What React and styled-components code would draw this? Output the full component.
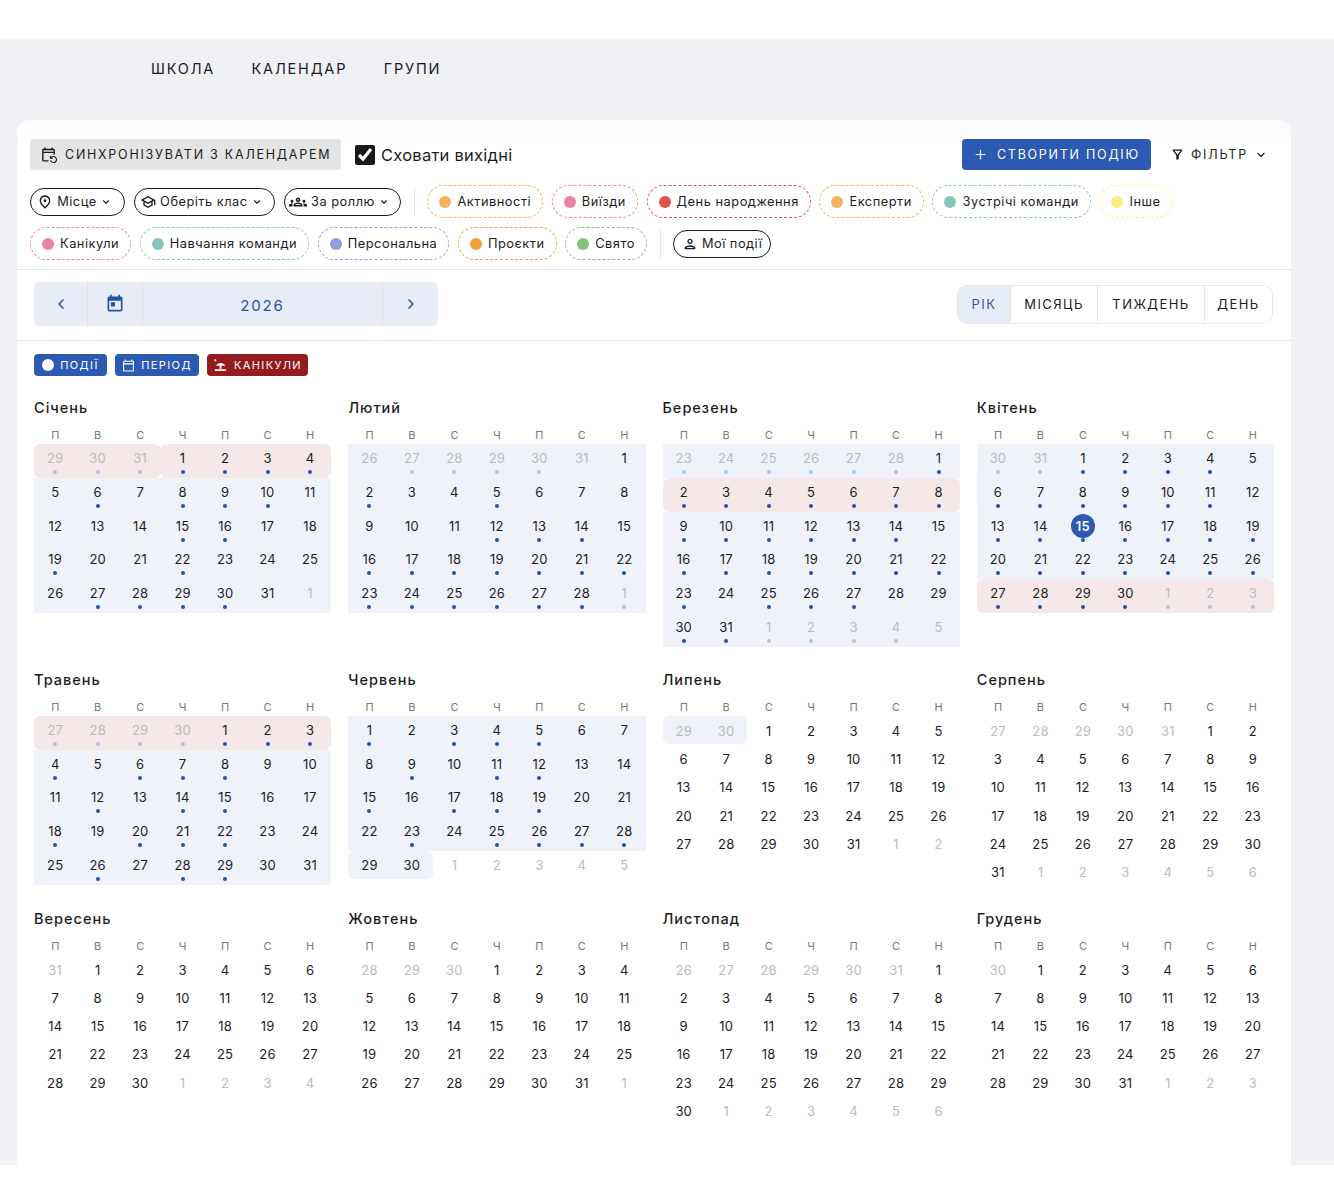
import React from 'react';
import styled, { createGlobalStyle } from 'styled-components';
import { ChevronLeft, ChevronRight, ChevronDown, Plus } from 'lucide-react';
import {
  MdOutlineEventRepeat, MdOutlinePlace, MdOutlineSchool, MdOutlineGroups, MdOutlinePerson,
  MdOutlineFilterAlt, MdToday, MdOutlineCalendarToday,
} from 'react-icons/md';

const GlobalStyle = createGlobalStyle`
  html, body { margin: 0; padding: 0; background: #fff; }
  body { font-family: Inter, "Noto Sans", sans-serif; color: #1c1c1e; overflow: hidden; }
  * { box-sizing: border-box; }
`;

const WEEK = ['П', 'В', 'С', 'Ч', 'П', 'С', 'Н'];

// pink: [from, to) cell ranges, blue: count of shaded cells, dots: [prev month days, days, next month days]
const MONTHS = [
  { name: 'Січень', blue: 35, pink: [[0, 3], [3, 7]], dots: [[29, 30, 31], [1, 2, 3, 4, 6, 8, 9, 10, 15, 16, 19, 22, 27, 28, 29, 30], []] },
  { name: 'Лютий', blue: 35, pink: [], dots: [[27, 28, 29, 30], [2, 5, 12, 13, 14, 16, 17, 18, 19, 20, 21, 22, 23, 24, 25, 26, 27, 28], [1]] },
  { name: 'Березень', blue: 42, pink: [[7, 14]], dots: [[23, 24, 25, 26, 27, 28], [1, 2, 3, 4, 5, 6, 7, 8, 9, 10, 11, 12, 13, 14, 16, 17, 18, 19, 20, 21, 22, 23, 25, 26, 27, 30, 31], [1, 2, 3, 4]] },
  { name: 'Квітень', blue: 35, pink: [[28, 35]], today: 15, dots: [[30, 31], [1, 2, 3, 4, 6, 7, 8, 9, 10, 11, 13, 14, 15, 16, 17, 18, 19, 20, 21, 22, 23, 24, 25, 26, 27, 28, 29, 30], [1, 2, 3]] },
  { name: 'Травень', blue: 35, pink: [[0, 7]], dots: [[27, 28, 29, 30], [1, 2, 3, 4, 6, 7, 8, 12, 14, 15, 18, 20, 21, 22, 26, 28, 29], []] },
  { name: 'Червень', blue: 30, pink: [], dots: [[], [1, 3, 4, 5, 9, 11, 12, 15, 17, 18, 19, 23, 25, 26, 27, 28], []] },
  { name: 'Липень', blue: 2, pink: [], dots: [[], [], []] },
  { name: 'Серпень', blue: 0, pink: [], dots: [[], [], []] },
  { name: 'Вересень', blue: 0, pink: [], dots: [[], [], []] },
  { name: 'Жовтень', blue: 0, pink: [], dots: [[], [], []] },
  { name: 'Листопад', blue: 0, pink: [], dots: [[], [], []] },
  { name: 'Грудень', blue: 0, pink: [], dots: [[], [], []] },
];

function buildCells(month, index) {
  const first = (new Date(2026, index, 1).getDay() + 6) % 7;
  const days = new Date(2026, index + 1, 0).getDate();
  const prevDays = new Date(2026, index, 0).getDate();
  const cells = [];
  for (let i = first - 1; i >= 0; i--) {
    const day = prevDays - i;
    cells.push({ day, muted: true, dot: month.dots[0].includes(day) });
  }
  for (let day = 1; day <= days; day++) {
    cells.push({ day, today: month.today === day, dot: month.dots[1].includes(day) });
  }
  let next = 1;
  while (cells.length % 7) {
    cells.push({ day: next, muted: true, dot: month.dots[2].includes(next) });
    next++;
  }
  return cells.map((cell, i) => {
    const range = month.pink.find(([from, to]) => i >= from && i < to);
    if (range) {
      return { ...cell, tone: 'pink', roundLeft: i === range[0], roundRight: i === range[1] - 1 };
    }
    if (i < month.blue) {
      return { ...cell, tone: 'blue', roundRight: i === month.blue - 1 && month.blue % 7 !== 0, roundLeft: month.blue % 7 !== 0 && i === month.blue - month.blue % 7 };
    }
    return cell;
  });
}

function MonthCalendar({ month, index }) {
  const plain = month.dots[1].length === 0;
  return (
    <Month>
      <MonthTitle>{month.name}</MonthTitle>
      <Days>
        {WEEK.map((w, i) => <WeekDay key={i}>{w}</WeekDay>)}
        {buildCells(month, index).map((c, i) => (
          <Day key={i} $tone={c.tone} $dot={c.dot} $left={c.roundLeft} $right={c.roundRight}>
            <DayNumber $muted={c.muted} $today={c.today} $plain={plain}>{c.day}</DayNumber>
            {c.dot && <Dot $muted={c.muted} />}
          </Day>
        ))}
      </Days>
    </Month>
  );
}

const TYPES_ONE = [
  ['Активності', '#f2b15c'], ['Виїзди', '#e683a6'], ['День народження', '#e0524f'],
  ['Експерти', '#f2b15c'], ['Зустрічі команди', '#86c5bd'], ['Інше', '#fbee80'],
];
const TYPES_TWO = [
  ['Канікули', '#e683a6'], ['Навчання команди', '#86c5bd'], ['Персональна', '#949ed6'],
  ['Проєкти', '#f0a23b'], ['Свято', '#85bf7d'],
];

function TypeChip({ label, color }) {
  return <DashedChip $color={color}><ChipDot $color={color} />{label}</DashedChip>;
}

function BeachIcon() {
  return (
    <svg width="15" height="15" viewBox="0 0 16 16" fill="currentColor">
      <rect x="1.5" y="1.5" width="2" height="2" />
      <path d="M3.5 8.2C4.6 4.4 11.4 4.4 13 8.2Z" />
      <path d="M7.4 7.5h1.4l.5 4H6.9Z" />
      <rect x="2" y="12" width="12" height="1.8" />
    </svg>
  );
}

function App() {
  return (
    <>
      <GlobalStyle />
      <TopStrip />
      <Main>
        <Nav>
          <NavLink>Школа</NavLink>
          <NavLink>Календар</NavLink>
          <NavLink>Групи</NavLink>
        </Nav>
        <Card>
          <Toolbar>
            <ActionRow>
              <SyncButton><MdOutlineEventRepeat size={17} />Синхронізувати з календарем</SyncButton>
              <HideLabel>
                <HideBox type="checkbox" defaultChecked />
                Сховати вихідні
              </HideLabel>
              <Spacer />
              <CreateButton><Plus size={15} strokeWidth={1.8} />Створити подію</CreateButton>
              <FilterButton><MdOutlineFilterAlt size={15} />Фільтр<ChevronDown size={12} strokeWidth={2.4} /></FilterButton>
            </ActionRow>
            <ChipRows>
              <ChipRow>
                <OutlineChip $w={95}><MdOutlinePlace size={16} />Місце<ChevronDown size={10} strokeWidth={2.6} /></OutlineChip>
                <OutlineChip $w={141.5}><MdOutlineSchool size={16} />Оберіть клас<ChevronDown size={10} strokeWidth={2.6} /></OutlineChip>
                <OutlineChip $w={117.5}><MdOutlineGroups size={18} />За роллю<ChevronDown size={10} strokeWidth={2.6} /></OutlineChip>
                <ChipDivider />
                {TYPES_ONE.map(([label, color]) => <TypeChip key={label} label={label} color={color} />)}
              </ChipRow>
              <ChipRow>
                {TYPES_TWO.map(([label, color]) => <TypeChip key={label} label={label} color={color} />)}
                <ChipDivider />
                <OutlineChip $w={98}><MdOutlinePerson size={16} />Мої події</OutlineChip>
              </ChipRow>
            </ChipRows>
          </Toolbar>
          <Controls>
            <YearNav>
              <NavCell $w={54}><ChevronLeft size={16} strokeWidth={2.4} /></NavCell>
              <NavCell $w={55}><MdToday size={20} /></NavCell>
              <YearCell>2026</YearCell>
              <NavCell $w={55} $last><ChevronRight size={16} strokeWidth={2.4} /></NavCell>
            </YearNav>
            <Views>
              <ViewTab $active $w={53}>Рік</ViewTab>
              <ViewTab $w={87}>Місяць</ViewTab>
              <ViewTab $w={107}>Тиждень</ViewTab>
              <ViewTab $w={67} $last>День</ViewTab>
            </Views>
          </Controls>
          <Legend>
            <LegendTag $w={73}><LegendCircle />Події</LegendTag>
            <LegendTag $w={84}><MdOutlineCalendarToday size={13} />Період</LegendTag>
            <LegendTag $w={101} $red><BeachIcon />Канікули</LegendTag>
          </Legend>
          <YearGrid>
            {MONTHS.map((m, i) => <MonthCalendar key={m.name} month={m} index={i} />)}
          </YearGrid>
        </Card>
      </Main>
    </>
  );
}

export default App;

const TopStrip = styled.div`
  height: 39px;
  background: #fff;
`;

const Main = styled.main`
  height: 1126px;
  background: #f0f1f5;
  overflow: hidden;
  padding: 19.5px 43px 0 17px;
`;

const Nav = styled.nav`
  display: flex;
  gap: 36.5px;
  padding-left: 134px;
  margin-bottom: 41.5px;
`;

const NavLink = styled.a`
  font-size: 14.5px;
  line-height: 20px;
  font-weight: 400;
  letter-spacing: 1.8px;
  text-transform: uppercase;
  color: #1c1c1e;
`;

const Card = styled.section`
  width: 1274px;
  height: 1100px;
  background: linear-gradient(#f9fafa, #fff 24px);
  border-radius: 12px;
`;

const Toolbar = styled.div`
  padding: 19px 13px 9px;
  border-bottom: 1px solid #e4e4e6;
`;

const ActionRow = styled.div`
  display: flex;
  align-items: center;
  height: 31px;
`;

const Spacer = styled.div`
  flex: 1;
`;

const SyncButton = styled.button`
  display: flex;
  align-items: center;
  gap: 8px;
  width: 311px;
  height: 31px;
  padding: 0 0 0 10px;
  border: 0;
  border-radius: 4px;
  background: #e4e4e4;
  color: #1c1c1e;
  font: 400 12.5px Inter, sans-serif;
  letter-spacing: 1.75px;
  text-transform: uppercase;
  white-space: nowrap;
`;

const HideLabel = styled.label`
  display: flex;
  align-items: center;
  gap: 6px;
  margin-left: 14px;
  font-size: 16.5px;
  letter-spacing: 0.25px;
`;

const HideBox = styled.input`
  width: 20px;
  height: 20px;
  margin: 0;
  accent-color: #1a1a1a;
`;

const CreateButton = styled.button`
  display: flex;
  align-items: center;
  justify-content: center;
  gap: 9px;
  width: 189px;
  height: 31px;
  border: 0;
  border-radius: 4px;
  background: #2c59b1;
  color: #fff;
  font: 400 12.5px Inter, sans-serif;
  letter-spacing: 1.75px;
  text-transform: uppercase;
`;

const FilterButton = styled.button`
  display: flex;
  align-items: center;
  gap: 6px;
  margin: 0 11px 0 19px;
  padding: 0;
  border: 0;
  background: none;
  color: #1c1c1e;
  font: 400 12.5px Inter, sans-serif;
  letter-spacing: 1.8px;
  text-transform: uppercase;

  svg:last-child {
    margin-left: 1px;
  }
`;

const ChipRows = styled.div`
  display: flex;
  flex-direction: column;
  gap: 9px;
  margin-top: 15px;
`;

const ChipRow = styled.div`
  display: flex;
  align-items: center;
  gap: 8.6px;
`;

const OutlineChip = styled.button`
  display: flex;
  align-items: center;
  justify-content: center;
  gap: 4px;
  width: ${(p) => p.$w}px;
  height: 28px;
  padding: 0 7px 0 0;
  border: 1.3px solid #1c1c1e;
  border-radius: 14px;
  background: #fff;
  color: #1c1c1e;
  font: 400 12.8px Inter, sans-serif;
  letter-spacing: 0.5px;
  white-space: nowrap;

  &:last-child {
    padding: 0;
  }
`;

const ChipDivider = styled.div`
  width: 1px;
  height: 28px;
  margin: 0 4px;
  background: #e6e6e8;
`;

const DashedChip = styled.div`
  display: flex;
  align-items: center;
  gap: 6px;
  height: 33px;
  padding: 0 11px;
  border: 1.3px dashed ${(p) => p.$color};
  border-radius: 16.5px;
  font-size: 12.8px;
  letter-spacing: 0.53px;
  color: #1c1c1e;
  white-space: nowrap;
`;

const ChipDot = styled.span`
  width: 12px;
  height: 12px;
  border-radius: 50%;
  background: ${(p) => p.$color};
`;

const Controls = styled.div`
  display: flex;
  align-items: center;
  justify-content: space-between;
  height: 71px;
  padding: 0 18px 2px 17px;
  border-bottom: 1px solid #e4e4e6;
`;

const YearNav = styled.div`
  display: flex;
  height: 44px;
  border-radius: 6px;
  background: #e8ecf6;
  color: #2454a8;
`;

const NavCell = styled.div`
  display: flex;
  align-items: center;
  justify-content: center;
  width: ${(p) => p.$w}px;
  border-right: ${(p) => (p.$last ? '0' : '1.5px solid #dfe1e6')};
`;

const YearCell = styled.div`
  display: flex;
  align-items: center;
  justify-content: center;
  width: 240px;
  padding-top: 2px;
  border-right: 1.5px solid #dfe1e6;
  font-size: 15px;
  font-weight: 400;
  letter-spacing: 1.9px;
`;

const Views = styled.div`
  display: flex;
  height: 39px;
  border: 1.5px solid #e4e6ea;
  border-radius: 10px;
  overflow: hidden;
`;

const ViewTab = styled.div`
  display: flex;
  align-items: center;
  justify-content: center;
  width: ${(p) => p.$w}px;
  border-right: ${(p) => (p.$last ? '0' : '1.5px solid #e4e6ea')};
  background: ${(p) => (p.$active ? '#e8ecf6' : '#fff')};
  color: ${(p) => (p.$active ? '#2c59b1' : '#1c1c1e')};
  font-size: 13px;
  font-weight: 400;
  letter-spacing: 1.45px;
  text-transform: uppercase;
`;

const Legend = styled.div`
  display: flex;
  gap: 8px;
  padding: 13px 17px 22px;
`;

const LegendTag = styled.div`
  display: flex;
  align-items: center;
  justify-content: center;
  gap: 6px;
  width: ${(p) => p.$w}px;
  height: 22px;
  border-radius: 4px;
  background: ${(p) => (p.$red ? '#941b20' : '#2c59b1')};
  color: #fff;
  font-size: 11px;
  font-weight: 400;
  letter-spacing: 1.4px;
  text-transform: uppercase;
`;

const LegendCircle = styled.span`
  width: 12px;
  height: 12px;
  border-radius: 50%;
  background: #fff;
`;

const YearGrid = styled.div`
  display: grid;
  grid-template-columns: repeat(4, 1fr);
  align-items: start;
  column-gap: 17px;
  row-gap: 23px;
  padding: 0 17px;
`;

const Month = styled.div``;

const MonthTitle = styled.h3`
  margin: 0 0 8px;
  font-size: 14.5px;
  line-height: 20px;
  font-weight: 500;
  letter-spacing: 1px;
`;

const Days = styled.div`
  display: grid;
  grid-template-columns: repeat(7, 1fr);
`;

const WeekDay = styled.div`
  height: 18px;
  font-size: 11px;
  line-height: 18px;
  text-align: center;
  color: #777;
`;

const toneColor = { blue: '#eff2f9', pink: '#f5e8e8' };

const Day = styled.div`
  display: flex;
  flex-direction: column;
  align-items: center;
  min-height: ${(p) => (p.$dot ? '33.8px' : '28.3px')};
  background: ${(p) => toneColor[p.$tone] || 'transparent'};
  border-radius: ${(p) => (p.$left ? '6px' : '0')} ${(p) => (p.$right ? '6px 6px' : '0 0')} ${(p) => (p.$left ? '6px' : '0')};
`;

const DayNumber = styled.span`
  display: flex;
  align-items: center;
  justify-content: center;
  width: 24px;
  height: 24px;
  margin-top: ${(p) => (p.$plain ? '3px' : '2px')};
  border-radius: 50%;
  font-size: 13px;
  letter-spacing: 0.2px;
  background: ${(p) => (p.$today ? '#2c59b1' : 'transparent')};
  color: ${(p) => (p.$today ? '#fff' : p.$muted ? '#bbbbbd' : '#1c1c1e')};
  font-weight: ${(p) => (p.$today ? 600 : 400)};
`;

const Dot = styled.span`
  width: 4px;
  height: 4px;
  border-radius: 50%;
  background: ${(p) => (p.$muted ? '#b4c1e4' : '#2050b0')};
`;
